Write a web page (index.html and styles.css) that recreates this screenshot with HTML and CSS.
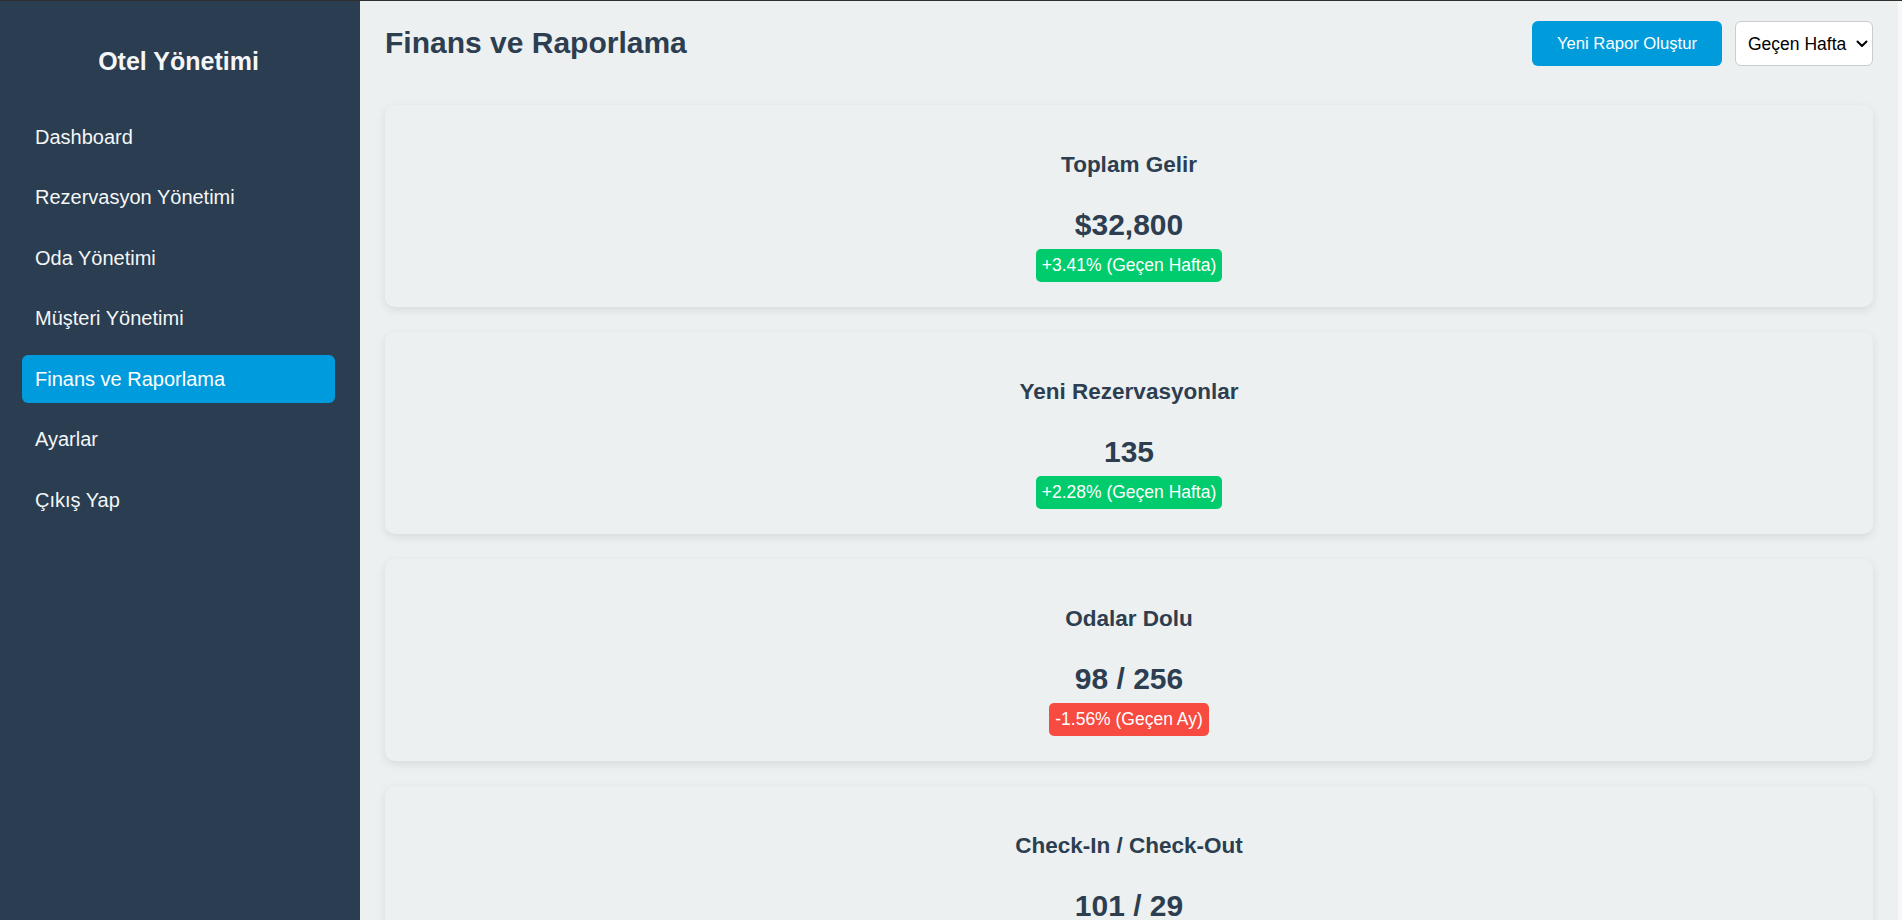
FILE: index.html
```html
<!DOCTYPE html>
<html lang="tr">
<head>
<meta charset="utf-8">
<title>Finans ve Raporlama</title>
<link rel="stylesheet" href="styles.css">
</head>
<body>
<div class="app">
  <aside class="sidebar">
    <h2 class="brand">Otel Yönetimi</h2>
    <ul class="nav">
      <li><a class="nav-link" href="#">Dashboard</a></li>
      <li><a class="nav-link" href="#">Rezervasyon Yönetimi</a></li>
      <li><a class="nav-link" href="#">Oda Yönetimi</a></li>
      <li><a class="nav-link" href="#">Müşteri Yönetimi</a></li>
      <li><a class="nav-link active" href="#">Finans ve Raporlama</a></li>
      <li><a class="nav-link" href="#">Ayarlar</a></li>
      <li><a class="nav-link" href="#">Çıkış Yap</a></li>
    </ul>
  </aside>
  <main class="main">
    <header class="header">
      <h1 class="page-title">Finans ve Raporlama</h1>
      <div class="actions">
        <button class="btn-primary" type="button">Yeni Rapor Oluştur</button>
        <div class="select-wrap">
          <select class="period">
            <option>Geçen Hafta</option>
            <option>Geçen Ay</option>
            <option>Geçen Yıl</option>
          </select>
          <svg class="chevron" width="12" height="8" viewBox="0 0 12 8" aria-hidden="true">
            <path d="M1.5 1.5 L6 6 L10.5 1.5" fill="none" stroke="#000" stroke-width="2" stroke-linecap="round" stroke-linejoin="round"/>
          </svg>
        </div>
      </div>
    </header>
    <section class="cards">
      <div class="card">
        <h3 class="card-title">Toplam Gelir</h3>
        <div class="card-value">$32,800</div>
        <span class="badge up">+3.41% (Geçen Hafta)</span>
      </div>
      <div class="card">
        <h3 class="card-title">Yeni Rezervasyonlar</h3>
        <div class="card-value">135</div>
        <span class="badge up">+2.28% (Geçen Hafta)</span>
      </div>
      <div class="card">
        <h3 class="card-title">Odalar Dolu</h3>
        <div class="card-value">98 / 256</div>
        <span class="badge down">-1.56% (Geçen Ay)</span>
      </div>
      <div class="card">
        <h3 class="card-title">Check-In / Check-Out</h3>
        <div class="card-value">101 / 29</div>
        <span class="badge up">+1.12% (Bugün)</span>
      </div>
    </section>
  </main>
  <div class="scroll-strip"></div>
</div>
</body>
</html>
```
FILE: styles.css
```css
html, body {
  margin: 0;
  padding: 0;
  height: 100%;
  overflow: hidden;
}

body {
  font-family: "Liberation Sans", Arial, sans-serif;
  background: #ecf0f1;
  color: #2c3e50;
  border-top: 1px solid #2f2f2f;
  box-sizing: border-box;
}

.app {
  display: flex;
  height: 919px;
}

.sidebar {
  width: 360px;
  flex: 0 0 360px;
  background: #2a3d51;
  color: #fff;
  box-sizing: border-box;
  padding: 46px 25px 0 22px;
}

.brand {
  margin: 0 0 37px 0;
  text-align: center;
  font-size: 25px;
  font-weight: bold;
  line-height: 29px;
  color: #f4f6f7;
}

.nav {
  list-style: none;
  margin: 0;
  padding: 0;
  display: flex;
  flex-direction: column;
  gap: 12.5px;
}

.nav-link {
  display: block;
  padding: 12.5px 13px;
  font-size: 20px;
  line-height: 23px;
  color: #f4f6f7;
  text-decoration: none;
  border-radius: 6px;
}

.nav-link.active {
  background: #009bdd;
  color: #fff;
}

.main {
  flex: 1;
  min-width: 0;
  padding: 20px 25px 0 25px;
  box-sizing: border-box;
}

.header {
  display: flex;
  align-items: center;
  justify-content: space-between;
  height: 45px;
  margin-bottom: 39px;
}

.page-title {
  margin: 0;
  font-size: 30px;
  line-height: 34px;
  font-weight: bold;
  color: #2c3e50;
  position: relative;
  top: -1px;
}

.actions {
  display: flex;
  align-items: center;
  gap: 13px;
}

.btn-primary {
  width: 190px;
  height: 45px;
  border: none;
  border-radius: 6px;
  background: #009bdb;
  color: #fff;
  font-family: "Liberation Sans", Arial, sans-serif;
  font-size: 16.67px;
  padding: 0;
}

.select-wrap {
  position: relative;
  display: flex;
}

.period {
  -webkit-appearance: none;
  appearance: none;
  width: 138px;
  height: 45px;
  border: 1px solid #c9cccd;
  border-radius: 6px;
  background: #fff;
  color: #000;
  font-family: "Liberation Sans", Arial, sans-serif;
  font-size: 17.5px;
  padding: 0 24px 0 12px;
}

.chevron {
  position: absolute;
  right: 5px;
  top: 19px;
  pointer-events: none;
}

.cards {
  display: flex;
  flex-direction: column;
  gap: 25px;
}

.card {
  background: #ecf0f1;
  border-radius: 10px;
  box-shadow: 0 3px 10px rgba(0, 0, 0, 0.09);
  padding: 25px;
  text-align: center;
}

.card-title {
  margin: 22px 0 31px 0;
  font-size: 22.5px;
  line-height: 25px;
  font-weight: bold;
  color: #2c3e50;
}

.card-value {
  font-size: 30px;
  line-height: 34px;
  font-weight: bold;
  color: #2c3e50;
  margin-bottom: 7px;
}

.badge {
  display: inline-block;
  padding: 6px 6px;
  font-size: 17.5px;
  line-height: 21px;
  color: #fff;
  border-radius: 5px;
}

.badge.up {
  background: #00cc6d;
}

.badge.down {
  background: #f74a41;
}

.scroll-strip {
  width: 4px;
  flex: 0 0 4px;
  background: #f6f7f7;
}
```
